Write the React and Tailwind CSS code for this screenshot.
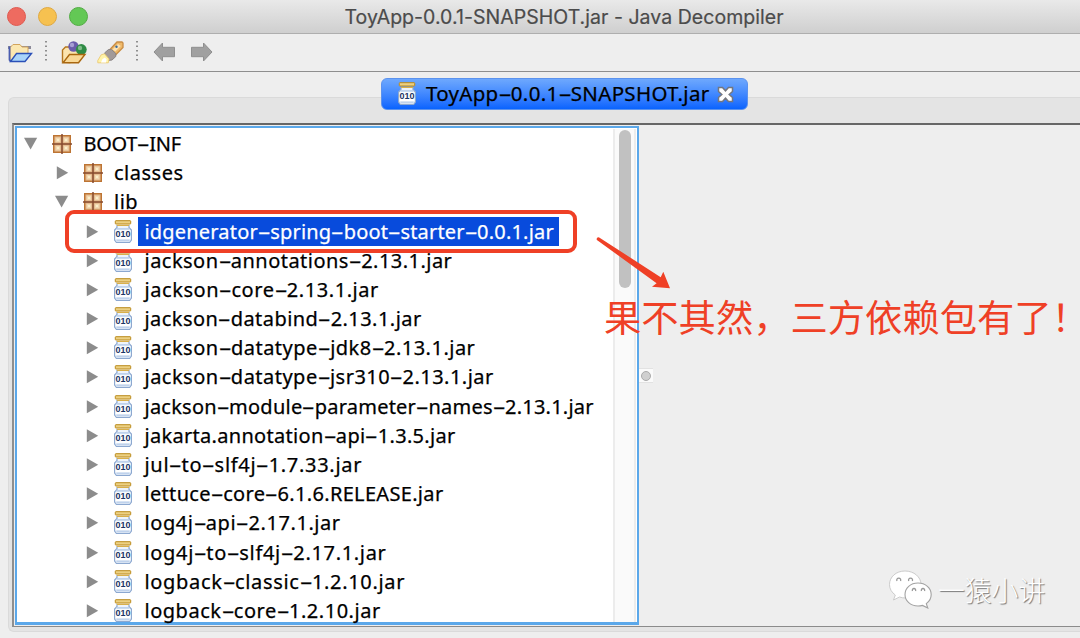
import React from 'react'

const rows = [
  { label: 'BOOT-INF', level: 0, type: 'package', open: true, tracking: 'tracking-[-0.3px]' },
  { label: 'classes', level: 1, type: 'package', tracking: 'tracking-[0.5px]' },
  { label: 'lib', level: 1, type: 'package', open: true, tracking: 'tracking-[0.5px]' },
  { label: 'idgenerator-spring-boot-starter-0.0.1.jar', level: 2, type: 'jar', selected: true, tracking: 'tracking-[0.19px]' },
  { label: 'jackson-annotations-2.13.1.jar', level: 2, type: 'jar', tracking: 'tracking-[0.47px]' },
  { label: 'jackson-core-2.13.1.jar', level: 2, type: 'jar', tracking: 'tracking-[0.56px]' },
  { label: 'jackson-databind-2.13.1.jar', level: 2, type: 'jar', tracking: 'tracking-[0.45px]' },
  { label: 'jackson-datatype-jdk8-2.13.1.jar', level: 2, type: 'jar', tracking: 'tracking-[0.49px]' },
  { label: 'jackson-datatype-jsr310-2.13.1.jar', level: 2, type: 'jar', tracking: 'tracking-[0.48px]' },
  { label: 'jackson-module-parameter-names-2.13.1.jar', level: 2, type: 'jar', tracking: 'tracking-[0.23px]' },
  { label: 'jakarta.annotation-api-1.3.5.jar', level: 2, type: 'jar', tracking: 'tracking-[0.3px]' },
  { label: 'jul-to-slf4j-1.7.33.jar', level: 2, type: 'jar', tracking: 'tracking-[0.7px]' },
  { label: 'lettuce-core-6.1.6.RELEASE.jar', level: 2, type: 'jar', tracking: 'tracking-[0.32px]' },
  { label: 'log4j-api-2.17.1.jar', level: 2, type: 'jar', tracking: 'tracking-[0.57px]' },
  { label: 'log4j-to-slf4j-2.17.1.jar', level: 2, type: 'jar', tracking: 'tracking-[0.68px]' },
  { label: 'logback-classic-1.2.10.jar', level: 2, type: 'jar', tracking: 'tracking-[0.68px]' },
  { label: 'logback-core-1.2.10.jar', level: 2, type: 'jar', tracking: 'tracking-[0.52px]' }
]

const indents = ['pl-[6px]', 'pl-[36.5px]', 'pl-[67px]']

function JarIcon() {
  return (
    <svg width="20" height="24" viewBox="0 0 20 24">
      <path d="M4 5.500h12v2l2.400 2.600v9.900l-1.800 2.500H3.400L1.600 20v-9.900L4 7.500z" fill="#eef4fb" stroke="#8ca8d0" strokeWidth="1.200" />
      <path d="M3.400 20.500h13.200M3.600 8.900h12.800" stroke="#bfd2ec" strokeWidth="1.800" />
      <rect x="2.600" y="10.500" width="14.800" height="8.500" fill="#fff" />
      <rect x="2.300" y="0.700" width="15.400" height="3.300" rx="0.600" fill="#ecd083" stroke="#bb8a1c" strokeWidth="1" />
      <path d="M4 5.400h12" stroke="#d9b04a" strokeWidth="1.200" />
      <text x="10" y="17.400" textAnchor="middle" fontFamily="Liberation Sans" fontWeight="bold" fontSize="8.800" textLength="15" lengthAdjust="spacingAndGlyphs" fill="#1c3566">010</text>
    </svg>
  )
}

function PackageIcon() {
  return (
    <svg width="20" height="20" viewBox="0 0 20 20">
      <rect x="1.700" y="1.700" width="16.600" height="16.600" fill="#e0b384" stroke="#bd7433" strokeWidth="1.400" />
      <path d="M3.500 3.500h4.800v4.800H3.500zM11.700 3.500h4.800v4.800h-4.800zM3.500 11.700h4.800v4.800H3.500zM11.700 11.700h4.800v4.800h-4.800z" fill="#f2d8b2" />
      <path d="M5 5h2v2H5zM13 5h2v2h-2zM5 13h2v2H5zM13 13h2v2h-2z" fill="#fbefc9" />
      <path d="M10 0v20M0 10h20" stroke="#854a2e" strokeWidth="1.500" />
    </svg>
  )
}

function Disclosure({ open }) {
  return (
    <svg width="15" height="14" viewBox="0 0 15 14">
      <path d={open ? 'M1 0.800h13.200L7.600 12.600z' : 'M2.800 0.300v13L14.200 6.800z'} fill="#8c8c8c" />
    </svg>
  )
}

// Lucida-like labels: the dash is wider than in Noto Sans
function Label({ text }) {
  return text.split(/(-)/).map((part, i) =>
    part === '-' ? (
      <span key={i} className="inline-block w-[12.3px] scale-x-[2] text-center tracking-normal">-</span>
    ) : (
      <span key={i}>{part}</span>
    )
  )
}

function TreeRow({ row }) {
  return (
    <div className={`flex h-[29.2px] shrink-0 items-center ${indents[row.level]}`}>
      <Disclosure open={row.open} />
      <span className="ml-[14px] flex w-5 justify-center">
        {row.type === 'jar' ? <JarIcon /> : <PackageIcon />}
      </span>
      <span
        className={`ml-[5px] flex h-[29px] items-center whitespace-pre pr-[5px] pb-px pl-[6.500px] [-webkit-text-stroke:0.25px_currentColor] ${row.tracking} ${
          row.selected ? 'bg-[#084bdc] text-white' : 'text-black'
        }`}
      >
        <Label text={row.label} />
      </span>
    </div>
  )
}

function OpenFileIcon() {
  return (
    <svg width="26" height="20" viewBox="0 0 26 20">
      <path d="M1 3h23v3H1z" fill="#8c8a99" />
      <path d="M3 17.500V4.500l3-3h7l2 2.500h6V12L9 17.500z" fill="#fbe7b0" stroke="#d2a45c" strokeWidth="1" />
      <path d="M2.500 3.500v13.500l1.500 1.500" fill="none" stroke="#4a5db0" strokeWidth="1.800" />
      <path d="M9.500 10.500h15L18 18.500H3.500z" fill="#a9d4fa" stroke="#2b50b8" strokeWidth="1.400" />
    </svg>
  )
}

function OpenTypeIcon() {
  return (
    <svg width="27" height="23" viewBox="0 0 27 23">
      <path d="M1.500 21V9l3-3h5l2 2.500h9V14L9 21.500z" fill="#fbe4ae" stroke="#b5771f" strokeWidth="1.400" />
      <circle cx="12.500" cy="5.500" r="5.200" fill="#6a5cab" />
      <circle cx="11" cy="4" r="2.200" fill="#a79fd4" />
      <circle cx="20.300" cy="8.500" r="5.400" fill="#2f8b45" />
      <circle cx="19" cy="7" r="2.200" fill="#7fbd89" />
      <path d="M8.500 13.500h15.500L17.500 21.800H2z" fill="#f9d895" stroke="#a9670f" strokeWidth="1.400" />
    </svg>
  )
}

function SearchIcon() {
  return (
    <svg width="27" height="23" viewBox="0 0 27 23">
      <path d="M12.500 9L20 1h5l1 1v4.500L17.500 15z" fill="#efb969" stroke="#c98d45" strokeWidth="1.300" />
      <path d="M15.500 8.500L21 3l2.800 2-5.500 5.500z" fill="#fbe2b4" />
      <circle cx="19.500" cy="5.800" r="1.200" fill="#39699c" />
      <path d="M7.500 12l4-3.500h3l4.300 4v3l-3.800 3.500-4 .5z" fill="#a29a99" stroke="#8a8483" />
      <path d="M.8 21.800v-2.300l3.400-5.700 3.300-1L12 18l-.7 3.800z" fill="#fff3a8" stroke="#eccb72" strokeWidth="0.900" />
      <path d="M4 21.500l1.500-3.500 2.500-1.500 1.500 2-.5 3z" fill="#fff" />
    </svg>
  )
}

function NavArrow({ flip }) {
  return (
    <svg className={flip ? 'rotate-180' : ''} width="23" height="20" viewBox="0 0 23 20">
      <path d="M1 10L9.500 1v4.300H21.500v9.400H9.500V19z" fill="#a0a0a0" stroke="#8f8f8f" strokeWidth="1" strokeLinejoin="round" />
    </svg>
  )
}

function Divider() {
  return (
    <svg width="2" height="20" viewBox="0 0 2 20">
      <path d="M1 0v20" stroke="#777" strokeWidth="1.600" strokeDasharray="1.600 2.900" />
    </svg>
  )
}

function TitleBar() {
  return (
    <div className="relative flex h-[34px] shrink-0 items-center border-b border-[#aeaeae] bg-linear-to-b from-[#e9e9e9] to-[#cfcfcf] pl-[7px]">
      <div className="flex gap-[12px]">
        <span className="size-[19px] rounded-full border border-[#df5a50] bg-[#ee6b60]" />
        <span className="size-[19px] rounded-full border border-[#e0a941] bg-[#f6c150]" />
        <span className="size-[19px] rounded-full border border-[#53ac45] bg-[#63c855]" />
      </div>
      <h1 className="absolute top-[4px] left-[344.500px] whitespace-pre font-[Inter] text-[19.5px] leading-[27px] tracking-[0.04px] text-[#4b4b4b] [-webkit-text-stroke:0.2px_currentColor]">
        ToyApp-0.0.1-SNAPSHOT.jar - Java Decompiler
      </h1>
    </div>
  )
}

function Toolbar() {
  return (
    <div className="flex h-[38px] shrink-0 items-center border-b border-[#8e8e8e] bg-[#eeeeee] pl-[7px]">
      <OpenFileIcon />
      <span className="ml-[12px] -mt-[4px]"><Divider /></span>
      <span className="ml-[14px] -mt-px"><OpenTypeIcon /></span>
      <span className="ml-[9px] -mt-px"><SearchIcon /></span>
      <span className="ml-[12px] -mt-[4px]"><Divider /></span>
      <span className="ml-[15px] -mt-px"><NavArrow /></span>
      <span className="ml-[14px] -mt-px"><NavArrow flip /></span>
    </div>
  )
}

function FileTab() {
  return (
    <div className="absolute top-[78px] left-[381px] flex h-[32px] w-[367px] items-center rounded-[6px] border border-[#5b92ee] bg-linear-to-b from-[#6ea8fd] to-[#0763fe] pl-[15px] text-[20.500px] text-black">
      <JarIcon />
      <span className="ml-[9px] w-[284px] whitespace-pre pb-px tracking-[0.3px] [-webkit-text-stroke:0.25px_currentColor]">
        <Label text="ToyApp-0.0.1-SNAPSHOT.jar" />
      </span>
      <svg className="ml-[7px]" width="17" height="17" viewBox="0 0 17 17">
        <path d="M1.500 1.500h4l3 3.300 3-3.300h4v4l-3.300 3 3.300 3v4h-4l-3-3.300-3 3.300h-4v-4l3.300-3-3.300-3z" fill="#fff" stroke="#74777f" strokeWidth="1.500" />
      </svg>
    </div>
  )
}

function Watermark() {
  return (
    <div className="absolute top-[568px] left-[888px] flex items-center">
      <svg width="46" height="40" viewBox="0 0 46 40">
        <path d="M17 2C8 2 1.500 8 1.500 15.500c0 4.500 2.300 8 5.800 10.500L5.500 31l6-3c2 .7 4 1 6 1C26 29 33 23 33 15.500S26 2 17 2z" fill="#fff" stroke="#c6c6c6" strokeWidth="0.900" />
        <path d="M30 14c-7.500 0-13 5-13 11.500S22.500 37 30 37c1.600 0 3-.2 4.500-.6l5.300 2.600-1.500-4.400c3-2.100 4.900-5.200 4.900-9.100C43.200 19 37.500 14 30 14z" fill="#fff" stroke="#a2a2a2" strokeWidth="1.100" />
        <g fill="none" stroke="#999" strokeWidth="1.300">
          <path d="M9 12a2 2 0 1 1 3.500 0M20.800 12a2 2 0 1 1 3.500 0M24.500 22a1.700 1.700 0 1 1 3 0M33.500 22a1.700 1.700 0 1 1 3 0" />
        </g>
      </svg>
      <span className="mt-[2px] ml-[4px] font-['Noto_Sans_CJK_SC',sans-serif] text-[26.800px] leading-[40px] font-light whitespace-pre text-white [text-shadow:1px_1px_1px_#777]">
        一猿小讲
      </span>
    </div>
  )
}

export default function App() {
  return (
    <div className="relative flex h-[638px] w-[1080px] flex-col overflow-hidden bg-[#eeeeee] font-['Noto_Sans',sans-serif]">
      <TitleBar />
      <Toolbar />

      {/* Tabbed pane */}
      <div className="mt-[25px] ml-[8px] flex h-[535px] flex-col rounded-l-[6px] border border-r-0 border-[#dadada] bg-[#e4e4e4] pt-[25px] pl-[3px]">
        <div className="flex h-[504px] border-t-2 border-b border-l-2 border-t-[#666] border-b-[#8b8b8b] border-l-[#8f8f8f] bg-[#eeeeee] pt-px pl-px">
          <div className="flex h-[499px] w-[624px] border-2 border-b-3 border-[#5ba8ea] bg-white">
            {/* Tree */}
            <div className="flex w-[596px] flex-col pt-[1.400px] text-[20px] leading-[27px]">
              {rows.map((row) => (
                <TreeRow key={row.label} row={row} />
              ))}
            </div>
            <div className="mt-px mr-px flex flex-1 justify-center border-x-2 border-[#ececec] bg-[#fafafa] pt-px">
              <div className="h-[158px] w-[12px] rounded-full bg-[#c1c1c1]" />
            </div>
          </div>
          <div className="mt-[242px] flex h-[15px] w-[14px] items-center justify-center border-y border-[#e2e2e2] bg-[#fafafa]">
            <span className="size-[10px] rounded-full border border-[#aaa] bg-[#cfcfcf]" />
          </div>
        </div>
      </div>

      <FileTab />

      {/* Annotations */}
      <div className="absolute top-[210px] left-[65px] h-[43px] w-[512px] rounded-[9px] border-4 border-[#ef4026]" />
      <svg className="absolute top-[234px] left-[594px]" width="82" height="60" viewBox="0 0 82 60">
        <path d="M5.200 3.500L66.700 43.200l2.600-5.400L76 54.200l-18-1.400 4.600-3.600L3.600 6.500a1.700 1.700 0 0 1 1.600-3z" fill="#ef4026" />
      </svg>
      <p className="absolute top-[288px] left-[604px] font-['Noto_Sans_CJK_SC',sans-serif] text-[37.300px] leading-[56px] whitespace-pre text-[#ef4026]">
        果不其然，三方依赖包有了！
      </p>
      <Watermark />
    </div>
  )
}
